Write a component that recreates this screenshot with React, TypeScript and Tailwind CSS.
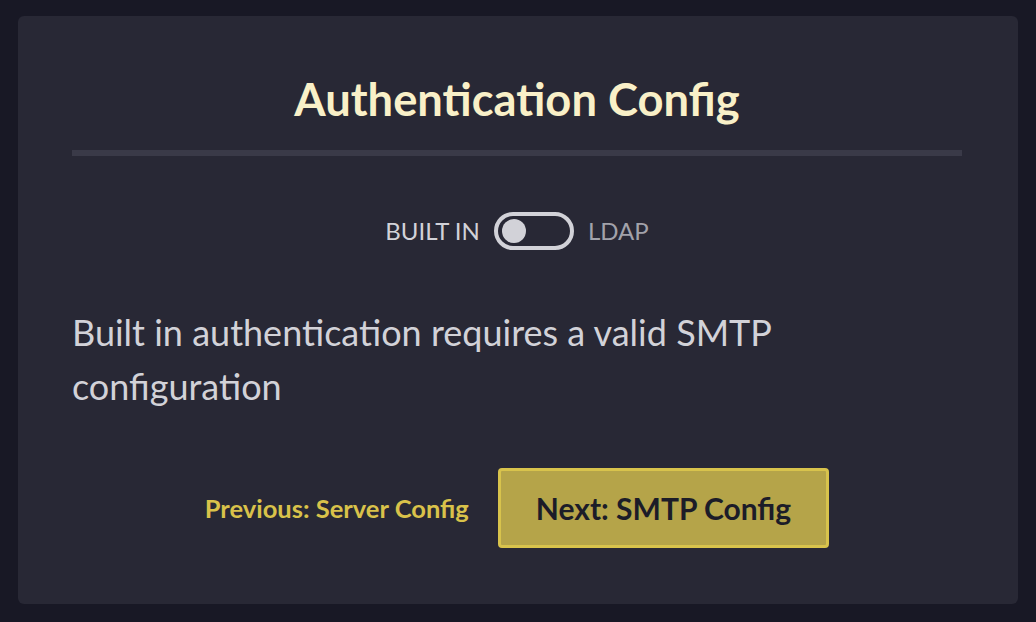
import React from "react";

export default function App() {
  return (
    <div
      className="w-[1036px] h-[622px] bg-[#181825] pt-[16px] px-[18px] pb-[18px]"
      style={{ fontFamily: "Lato, 'Open Sans', sans-serif" }}
    >
      <div className="h-full rounded-[6px] bg-[#282835] pl-[54px] pr-[56px] pt-[56px] flex flex-col">
        <h1 className="text-center text-[45.3px] leading-[54px] font-bold text-[#f9f0c8]">
          Authentication Config
        </h1>
        <div className="mt-[24px] h-[6px] bg-[#3a3a48]" />
        <div className="mt-[56px] flex items-center justify-center gap-[14px]">
          <span className="text-[24px] leading-[28px] text-[#d2d2d8]">BUILT IN</span>
          <div className="w-[80px] h-[38px] rounded-full border-[4px] border-[#d2d2d8] flex items-center">
            <div className="ml-[4px] w-[24px] h-[24px] rounded-full bg-[#d2d2d8]" />
          </div>
          <span className="text-[24px] leading-[28px] text-[#a2a2aa]">LDAP</span>
        </div>
        <p className="mt-[55px] text-[36px] leading-[54px] text-[#d2d2d8]">
          Built in authentication requires a valid SMTP configuration
        </p>
        <div className="mt-[55px] flex items-center justify-center gap-[29px]">
          <span className="text-[25.5px] font-bold text-[#d9c24a]">Previous: Server Config</span>
          <button className="h-[80px] px-[35px] rounded-[4px] border-[3px] border-[#d8c34c] bg-[#b5a449] text-[30px] font-bold text-[#1c1c28]">
            Next: SMTP Config
          </button>
        </div>
      </div>
    </div>
  );
}
